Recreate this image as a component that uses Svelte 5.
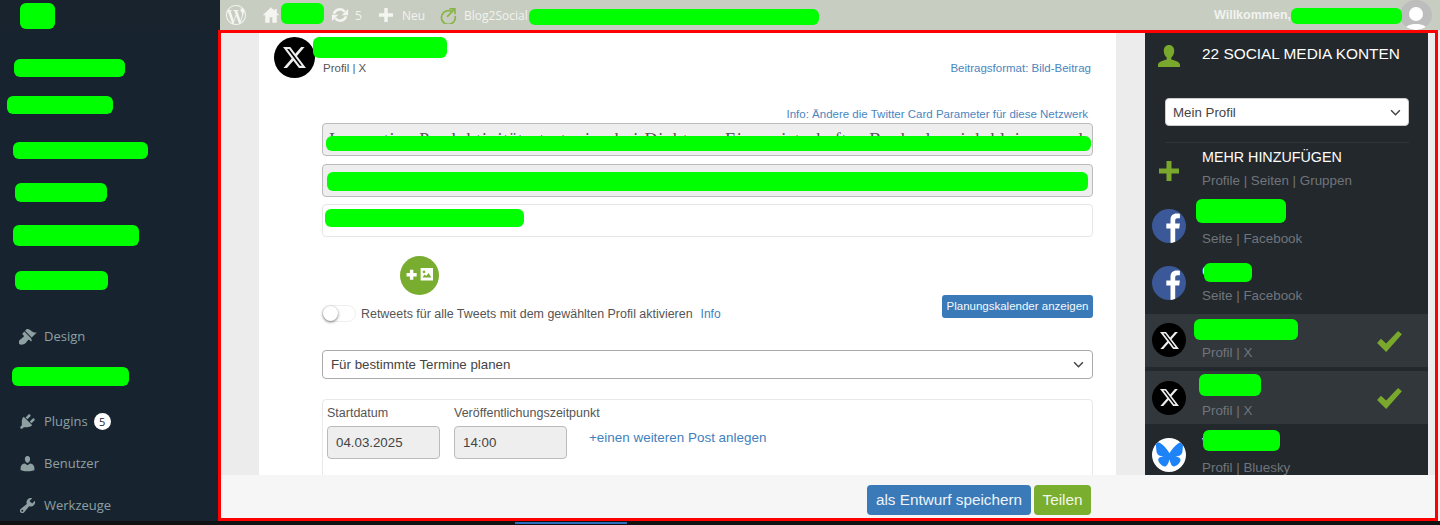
<script>
  const blobs = [
    [20,3,35,26],[14,59,111,18],[7,96,106,18],[13,142,135,17],[15,183,92,19],[13,225,126,21],[15,271,93,19],[12,367,117,19],
    [281,3,43,21],[529,9,290,16],[1291,8,111,16],
    [313,37,134,21],[326,136,765,15],[327,172,761,19],[325,209,199,18],
    [1196,199,90,24],[1204,263,48,19],[1194,319,104,21],[1199,374,62,22],[1203,430,77,21]
  ];
  const X = "M18.901 1.153h3.68l-8.04 9.19L24 22.846h-7.406l-5.8-7.584-6.638 7.584H.474l8.6-9.83L0 1.154h7.594l5.243 6.932ZM17.61 20.644h2.039L6.486 3.24H4.298Z";
  const BSKY = "M12 10.8c-1.087-2.114-4.046-6.053-6.798-7.995C2.566.944 1.561 1.266.902 1.565.139 1.908 0 3.08 0 3.768c0 .69.378 5.65.624 6.479.815 2.736 3.713 3.66 6.383 3.364-3.912.58-7.387 2.005-2.83 7.078 5.013 5.19 6.87-1.113 7.823-4.308.953 3.195 2.05 9.271 7.733 4.308 4.267-4.308 1.172-6.498-2.74-7.078 2.67.297 5.568-.628 6.383-3.364.246-.828.624-5.79.624-6.479 0-.688-.139-1.86-.902-2.203-.659-.299-1.664-.621-4.3 1.24C16.046 4.748 13.087 8.687 12 10.8Z";
  const rows = [
    { type: 'fb', name: '', sub: 'Seite | Facebook' },
    { type: 'fb', name: 'C', sub: 'Seite | Facebook' },
    { type: 'x', name: '', sub: 'Profil | X', on: true },
    { type: 'x', name: '', sub: 'Profil | X', on: true },
    { type: 'bs', name: 'V', sub: 'Profil | Bluesky' }
  ];
  const menu = [
    { label: 'Design', cls: 'm-design', d: 'M14.48 11.06L7.41 3.99l1.5-1.5c.5-.56 2.3-.47 3.51.32 1.21.8 1.43 1.28 2.91 2.1 1.18.64 2.45 1.26 4.45.85zm-.71.71L6.7 4.7 4.93 6.47c-.39.39-.39 1.02 0 1.41l1.06 1.06c.39.39.39 1.03 0 1.42-.6.6-1.43 1.11-2.21 1.69-.35.26-.7.53-1.01.84C1.43 13.25 1 14.77 1 16.5c0 .29.05.56.08.84-.08.21.09.39.37.62.52.35 1.23.68 2.05.68 1.73 0 3.25-.43 4.63-1.77.31-.31.58-.66.84-1.01.58-.78 1.09-1.61 1.69-2.21.39-.39 1.03-.39 1.42 0l1.06 1.06c.39.39 1.02.39 1.41 0z' },
    { label: 'Plugins', cls: 'm-plugins', badge: '5', d: 'M13.11 4.36L9.87 7.6 8 5.73l3.24-3.24c.35-.34 1.05-.2 1.56.32.52.51.66 1.21.31 1.55zm-8 1.77l.91-1.12 9.01 9.01-1.19.84c-.71.71-2.63 1.16-3.82 1.16H6.14L4.9 17.26c-.59.59-1.54.59-2.12 0-.59-.58-.59-1.53 0-2.12l1.24-1.24v-3.88c0-1.13.4-3.19 1.09-3.89zm7.26 3.97l3.24-3.24c.34-.35 1.04-.21 1.55.31.52.51.66 1.21.31 1.55l-3.24 3.25z' },
    { label: 'Benutzer', cls: 'm-user', d: 'M10 9.25c-2.27 0-2.73-3.44-2.73-3.44C7 4.02 7.82 2 9.97 2c2.16 0 2.98 2.02 2.71 3.81 0 0-.41 3.44-2.68 3.44zm0 2.57L12.72 10c2.39 0 4.52 2.33 4.52 4.53v2.49s-3.65 1.13-7.24 1.13c-3.65 0-7.24-1.13-7.24-1.13v-2.49c0-2.25 1.94-4.48 4.47-4.48z' },
    { label: 'Werkzeuge', cls: 'm-tools', d: 'M16.68 9.77c-1.34 1.34-3.3 1.67-4.95.99l-5.41 6.52c-.99.99-2.59.99-3.58 0s-.99-2.59 0-3.57l6.52-5.42c-.68-1.65-.35-3.61.99-4.95 1.28-1.28 3.12-1.62 4.72-1.06l-2.89 2.89 2.82 2.82 2.86-2.87c.53 1.58.18 3.39-1.08 4.65zM3.81 16.21c.4.39 1.04.39 1.43 0 .4-.4.4-1.04 0-1.43-.39-.4-1.03-.4-1.43 0-.39.39-.39 1.03 0 1.43z' }
  ];
</script>

<div class="page">
  <header class="topbar">
    <div class="tb-left"></div>
    <div class="tb-right">
      <svg class="wp" viewBox="0 0 24 24"><path d="M21.469 6.825c.84 1.537 1.318 3.3 1.318 5.175 0 3.979-2.156 7.456-5.363 9.325l3.295-9.527c.615-1.54.82-2.771.82-3.864 0-.405-.026-.78-.07-1.11m-7.981.105c.647-.03 1.232-.105 1.232-.105.582-.075.514-.93-.067-.899 0 0-1.755.135-2.88.135-1.064 0-2.85-.15-2.85-.15-.585-.03-.661.855-.075.885 0 0 .54.061 1.125.09l1.68 4.605-2.37 7.08L5.354 6.9c.649-.03 1.234-.1 1.234-.1.585-.075.516-.93-.065-.896 0 0-1.746.138-2.874.138-.2 0-.438-.008-.69-.015C4.911 3.15 8.235 1.215 12 1.215c2.809 0 5.365 1.072 7.286 2.833-.046-.003-.091-.009-.141-.009-1.06 0-1.812.923-1.812 1.914 0 .89.513 1.643 1.06 2.531.411.72.89 1.643.89 2.977 0 .915-.354 1.994-.821 3.479l-1.075 3.585-3.9-11.61.001.014zM12 22.784c-1.059 0-2.081-.153-3.048-.437l3.237-9.406 3.315 9.087c.024.053.05.101.078.149-1.12.393-2.325.609-3.582.609M1.211 12c0-1.564.336-3.05.935-4.39L7.29 21.709C3.694 19.96 1.212 16.271 1.211 12M12 0C5.385 0 0 5.385 0 12s5.385 12 12 12 12-5.385 12-12S18.615 0 12 0"/></svg>
      <svg class="home" viewBox="0 0 20 20"><path fill-rule="evenodd" d="M10 1.500.8 10.300h2.800V18.500h4.900v-6h3V18.500h4.900v-8.200h2.800L16.400 7.500V3.200h-2.400v2Z"/></svg>
      <svg class="sync" viewBox="0 0 20 20"><path class="ring" d="M3.200 8.400A7 7 0 0 1 15.300 6.300"/><path class="ring" d="M16.800 11.600A7 7 0 0 1 4.700 13.700"/><path d="M19 3.200v7.100h-7.100ZM1 16.800V9.700h7.100Z"/></svg>
      <span class="tb-count">5</span>
      <svg class="plus" viewBox="0 0 14 14"><path d="M5.300 0h3.400v5.300H14v3.400H8.700V14H5.300V8.700H0V5.300h5.300Z"/></svg>
      <span class="tb-new">Neu</span>
      <svg class="b2s" viewBox="0 0 18 18"><path d="M13.500 5.500A7.300 7.300 0 1 0 16 9.500" fill="none" stroke="#8ab44a" stroke-width="1.800"/><path d="M7.500 10.500 14.500 3M10 2h5.800v5.800" fill="none" stroke="#8ab44a" stroke-width="1.800"/></svg>
      <span class="tb-b2s">Blog2Social</span>
      <span class="tb-welcome">Willkommen,</span>
      <div class="tb-avatar">
        <svg viewBox="0 0 32 32"><circle cx="16" cy="14" r="7"/><path d="M4 34c0-8 5-10 12-10s12 2 12 10Z"/></svg>
      </div>
    </div>
  </header>

  <div class="body">
    <nav class="sidebar">
      {#each menu as m}
        <div class="menu-item {m.cls}">
          <svg class="m-icon" viewBox="0 0 20 20"><path d={m.d}/></svg>
          <span>{m.label}</span>
          {#if m.badge}<span class="badge">{m.badge}</span>{/if}
        </div>
      {/each}
    </nav>

    <main class="frame">
      <div class="content">
        <section class="card">
          <div class="card-head">
            <div class="x-circle big"><svg viewBox="0 0 24 24"><path d={X}/></svg></div>
            <div class="card-sub">Profil | X</div>
            <a class="format" href="#f">Beitragsformat: Bild-Beitrag</a>
          </div>
          <div class="form">
            <a class="card-info" href="#i">Info: Ändere die Twitter Card Parameter für diese Netzwerk</a>
            <div class="field disabled serif">Innovative Produktivitätsstrategien bei Dichtern: Ein meisterhaftes Buch, das sich kleinen und</div>
            <div class="field disabled"></div>
            <div class="field plain"></div>
            <div class="media-row">
              <button class="add-media" aria-label="Bild hinzufügen">
                <svg viewBox="0 0 24 12" width="27" height="13.500"><path d="M3.500 1.500h3v3h3v3h-3v3h-3v-3h-3v-3h3Z"/><path fill-rule="evenodd" d="M13 0h11v11H13Zm1.500 8.500h8l-2.500-4-2 2.500-1.300-1.200ZM16 2.200a1.200 1.200 0 1 0 .01 0Z"/></svg>
              </button>
            </div>
            <div class="retweet-row">
              <span class="toggle"><span class="knob"></span></span>
              <span class="rt-label">Retweets für alle Tweets mit dem gewählten Profil aktivieren</span>
              <a class="rt-info" href="#r">Info</a>
              <button class="cal-btn">Planungskalender anzeigen</button>
            </div>
            <div class="selectbox sched">
              <span>Für bestimmte Termine planen</span>
              <svg viewBox="0 0 12 8" width="11" height="7"><path d="M1 1.500 6 6.500l5-5" fill="none" stroke="#444" stroke-width="1.700"/></svg>
            </div>
            <div class="datebox">
              <div class="date-col">
                <label for="d1">Startdatum</label>
                <input id="d1" value="04.03.2025" readonly />
              </div>
              <div class="date-col">
                <label for="d2">Veröffentlichungszeitpunkt</label>
                <input id="d2" value="14:00" readonly />
              </div>
              <a class="more" href="#m">+einen weiteren Post anlegen</a>
            </div>
          </div>
        </section>

        <aside class="panel">
          <div class="p-head">
            <svg class="p-person" viewBox="0 0 24 24"><path d="M12 0c3.600 0 5.700 2.700 5.700 6.200 0 3-1.300 6-3.200 7.300v2.300c3 .9 9.500 2.300 9.500 5.700V24H0v-2.500c0-3.400 6.500-4.800 9.500-5.700v-2.300C7.600 12.200 6.300 9.200 6.300 6.200 6.300 2.700 8.400 0 12 0Z"/></svg>
            <span>22 SOCIAL MEDIA KONTEN</span>
          </div>
          <div class="selectbox p-select">
            <span>Mein Profil</span>
            <svg viewBox="0 0 12 8" width="11" height="7"><path d="M1 1.500 6 6.500l5-5" fill="none" stroke="#444" stroke-width="1.700"/></svg>
          </div>
          <div class="p-add">
            <svg class="p-plus" viewBox="0 0 20 20"><path d="M7.500 0h5v7.500H20v5h-7.500V20h-5v-7.500H0v-5h7.500Z"/></svg>
            <div>
              <div class="p-add-title">MEHR HINZUFÜGEN</div>
              <div class="p-sub">Profile | Seiten | Gruppen</div>
            </div>
          </div>
          <div class="p-rows">
            {#each rows as r}
              <div class="p-row" class:on={r.on}>
                {#if r.type === 'fb'}
                  <div class="net fb"><svg viewBox="0 0 34 34"><path d="M18.500 34V19.500h-4.200v-5h4.200v-3.600c0-4.200 2.500-6.300 6-6.300 1.700 0 3 .1 3.400.2v4.500h-2.400c-1.900 0-2.300 1-2.300 2.300v2.900h4.700l-.7 5h-4V34Z"/></svg></div>
                {:else if r.type === 'x'}
                  <div class="x-circle"><svg viewBox="0 0 24 24"><path d={X}/></svg></div>
                {:else}
                  <div class="net bs"><svg viewBox="0 0 24 24"><path d={BSKY}/></svg></div>
                {/if}
                <div class="p-text">
                  <div class="p-name">{r.name}</div>
                  <div class="p-sub">{r.sub}</div>
                </div>
                {#if r.on}
                  <svg class="check" viewBox="0 0 26 22"><path d="M0 12.500 4 8l5.500 5L22 0l4 3.500L9.500 22Z"/></svg>
                {/if}
              </div>
            {/each}
          </div>
        </aside>
      </div>
      <footer class="actions">
        <button class="btn blue">als Entwurf speichern</button>
        <button class="btn green">Teilen</button>
      </footer>
    </main>
  </div>
  <div class="bottom"><span class="strip"></span></div>

  {#each blobs as b}
    <span class="blob" style="left:{b[0]}px;top:{b[1]}px;width:{b[2]}px;height:{b[3]}px"></span>
  {/each}
</div>

<style>
  :global(body) { margin: 0; background: #f0f0f0; }
  .page { position: relative; width: 1440px; height: 525px; overflow: hidden; font-family: "Liberation Sans", Arial, sans-serif; color: #444; }
  .blob { position: absolute; background: #00ff00; border-radius: 6px; }

  .topbar { display: flex; height: 30px; }
  .tb-left { width: 220px; background: #18232e; box-shadow: 0 1px 0 #12191f; }
  .tb-right { flex: 1; background: #c8cdc2; display: flex; align-items: center; padding-left: 6px; color: #f1f3ee; font: 12px "Open Sans", sans-serif; position: relative; }
  .tb-right svg { fill: #f4f5f1; flex: none; }
  .wp { width: 20px; height: 20px; }
  .home { width: 18px; height: 18px; margin-left: 16px; }
  .sync { width: 18px; height: 18px; margin-left: 51px; }
  .ring { fill: none; stroke: #f4f5f1; stroke-width: 2.800px; }
  .tb-right .ring { fill: none; }
  .tb-count { margin-left: 6px; }
  .plus { width: 14px; height: 14px; margin-left: 17px; }
  .tb-new { margin-left: 9px; }
  .tb-right .b2s { width: 17px; height: 17px; margin-left: 15px; fill: none; }
  .tb-b2s { margin-left: 7px; }
  .tb-welcome { margin-left: auto; margin-right: 12px; font: bold 12.500px "Liberation Sans", sans-serif; position: absolute; left: 994px; }
  .tb-avatar { position: absolute; left: 1180px; top: 0; width: 32px; height: 30px; border-radius: 50%; background: #bdbdbd; overflow: hidden; }
  .tb-avatar svg { display: block; width: 32px; height: 32px; fill: #fff; }

  .body { display: flex; height: 491px; }
  .sidebar { width: 218px; background: #172430; position: relative; flex: none; }
  .menu-item { display: flex; align-items: center; color: #8ea0a2; font: 13px "Open Sans", sans-serif; height: 24px; padding-left: 18px; position: absolute; left: 0; }
  .m-icon { width: 19px; height: 19px; fill: #8ea0a2; margin-right: 7px; flex: none; }
  .m-design { top: 294px; }
  .m-plugins { top: 379px; }
  .m-user { top: 421px; }
  .m-tools { top: 463px; }
  .badge { width: 17px; height: 17px; margin-left: 6px; border-radius: 50%; background: #fff; color: #172430; font-size: 11px; display: flex; align-items: center; justify-content: center; }

  .frame { width: 1220px; box-sizing: border-box; border: 3px solid #ff0000; flex: none; display: flex; flex-direction: column; background: #ececec; }
  .content { flex: 1; min-height: 0; display: flex; overflow: hidden; padding-left: 38px; }
  .card { width: 857px; flex: none; background: #fff; box-sizing: border-box; }
  .card-head { height: 72px; position: relative; }
  .x-circle { width: 34px; height: 34px; border-radius: 50%; background: #000; display: flex; align-items: center; justify-content: center; flex: none; }
  .x-circle svg { width: 19px; height: 19px; fill: #eee; }
  .x-circle.big { position: absolute; left: 15px; top: 4px; width: 41px; height: 41px; }
  .x-circle.big svg { width: 23px; height: 23px; }
  .card-sub { position: absolute; left: 64px; top: 29px; font-size: 11.500px; color: #555; }
  .format { position: absolute; right: 25px; top: 29px; font-size: 11.500px; color: #4a86c0; text-decoration: none; }

  .form { margin: 0 23px 0 63px; width: 771px; }
  .card-info { display: block; text-align: right; padding-right: 5px; font-size: 11.500px; line-height: 18px; height: 18px; color: #4a86c0; text-decoration: none; }
  .field { height: 33px; box-sizing: border-box; border: 1px solid #bbb; border-radius: 4px; margin-bottom: 7.500px; overflow: hidden; background: #eee; white-space: nowrap; }
  .field.plain { background: #fff; border-color: #e6e6e6; margin-bottom: 0; }
  .serif { font: 18px/33px "Liberation Serif", serif; padding: 0 6px; letter-spacing: 0.800px; color: #555; }
  .media-row { height: 69px; display: flex; align-items: flex-start; padding: 18.500px 0 0 77.500px; box-sizing: border-box; }
  .add-media { width: 39px; height: 39px; border: 0; border-radius: 50%; background: #79ad2f; padding: 0; display: flex; align-items: center; justify-content: center; }
  .add-media svg { fill: #fff; }
  .retweet-row { display: flex; align-items: center; height: 24px; position: relative; margin-top: -12px; font-size: 12.450px; }
  .toggle { width: 34px; height: 17px; border-radius: 9px; border: 1px solid #eee; box-sizing: border-box; position: relative; flex: none; margin-top: 15px; }
  .knob { position: absolute; left: 0; top: 0; width: 15px; height: 15px; border-radius: 50%; background: #fff; box-shadow: 0 1px 3px rgba(0,0,0,.55); }
  .rt-label { margin-left: 5px; margin-top: 15px; color: #555; }
  .rt-info { margin-left: 8px; margin-top: 15px; font-size: 12px; color: #3f7fbd; text-decoration: none; }
  .cal-btn { margin-left: auto; background: #3a7ab8; color: #f4f8fb; border: 0; border-radius: 3px; height: 23px; width: 151px; padding: 0; font: 11.500px "Liberation Sans", sans-serif; }

  .selectbox { display: flex; align-items: center; justify-content: space-between; box-sizing: border-box; background: #fff; border: 1px solid #aaa; border-radius: 4px; font-size: 13.300px; color: #444; padding: 0 8px; }
  .sched { height: 29px; margin-top: 32px; }
  .p-select { height: 28px; width: 244px; margin-left: 20px; margin-top: 21px; border-color: #ccc; padding: 0 7px; }

  .datebox { margin-top: 20px; height: 120px; box-sizing: border-box; border: 1px solid #e8e8e8; border-radius: 4px; padding: 5px 0 0 4px; display: flex; gap: 14px; }
  .date-col { width: 113px; }
  .date-col label { display: block; font-size: 12.500px; color: #555; line-height: 16px; margin-bottom: 5px; white-space: nowrap; }
  .date-col input { display: block; width: 113px; height: 33px; box-sizing: border-box; background: #eee; border: 1px solid #bbb; border-radius: 4px; padding: 0 8px; font: 13.300px "Liberation Sans", sans-serif; color: #444; }
  .more { margin: 25px 0 0 8px; font-size: 13.450px; color: #3f7fbd; text-decoration: none; white-space: nowrap; }

  .panel { width: 283px; margin-left: 29px; background: #23282d; flex: none; color: #fff; }
  .p-head { display: flex; align-items: center; height: 44px; padding: 0 0 0 12px; margin-top: 0; }
  .p-person { width: 24px; height: 22px; fill: #7aa82d; margin-top: 1px; }
  .p-head span { margin-left: 21px; font-size: 15.400px; margin-top: -2px; }
  .p-add { margin: 16px 19px 0 20px; border-top: 1px solid #2f3439; display: flex; align-items: center; height: 52px; }
  .p-plus { width: 20px; height: 20px; fill: #7aa82d; margin-left: -6px; margin-top: 4px; }
  .p-add > div { margin-left: 23px; padding-top: 0; }
  .p-add-title { font-size: 14.300px; line-height: 18px; margin-top: -1px; }
  .p-sub { font-size: 13.400px; color: #70757c; line-height: 16px; white-space: nowrap; }
  .p-add .p-sub { margin-top: 7px; }
  .p-rows { display: flex; flex-direction: column; gap: 4.800px; margin-top: 4.500px; }
  .p-row { height: 52.500px; flex: none; display: flex; align-items: center; position: relative; padding-left: 7px; box-sizing: border-box; }
  .p-row.on { background: #32373c; }
  .p-text { margin-left: 16px; padding-top: 2px; }
  .p-name { height: 18px; font-size: 14px; line-height: 14px; color: #eee; }
  .p-text .p-sub { margin-top: 6px; }
  .net { width: 34px; height: 34px; border-radius: 50%; flex: none; overflow: hidden; }
  .net svg { display: block; }
  .fb { background: #3b5998; }
  .fb svg { width: 34px; height: 34px; fill: #fff; }
  .bs { background: #fff; display: flex; align-items: center; justify-content: center; }
  .bs svg { width: 27px; height: 27px; fill: #1e83f7; }
  .check { position: absolute; left: 232px; top: 17px; width: 25px; height: 21px; fill: #7aa82d; }

  .actions { height: 43px; flex: none; background: #f6f6f6; display: flex; align-items: flex-start; padding: 10px 344px 0 0; box-sizing: border-box; justify-content: flex-end; gap: 3px; }
  .btn { height: 30px; border: 0; border-radius: 4px; font: 15.300px "Liberation Sans", sans-serif; padding: 0; }
  .btn.blue { width: 164px; background: #3a7ab8; color: #eef4f9; }
  .btn.green { width: 57px; background: #7aae2f; color: #f3f7ea; }

  .bottom { height: 4px; background: #101112; position: relative; }
  .strip { position: absolute; left: 515px; width: 112px; top: 1px; height: 2px; background: #2c6fc0; }
</style>
